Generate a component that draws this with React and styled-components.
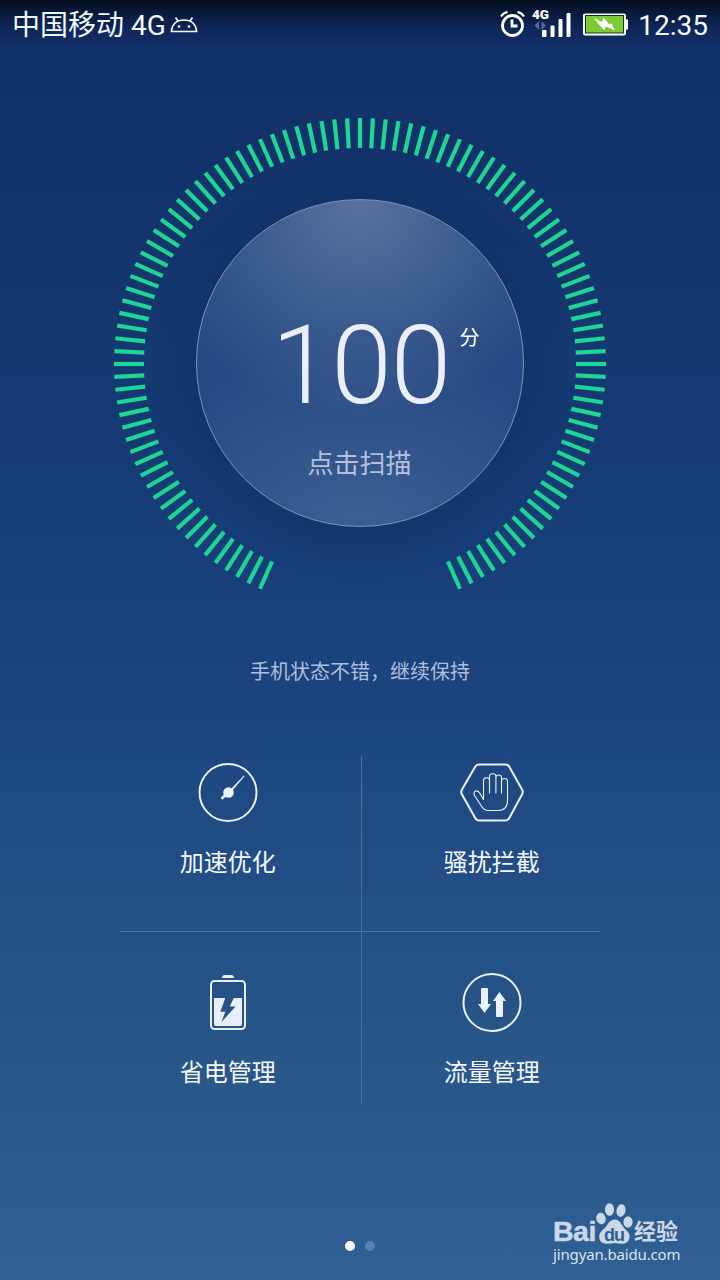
import styled, { createGlobalStyle } from "styled-components";

const GlobalStyle = createGlobalStyle`
    * {
        box-sizing: border-box;
    }

    body {
        margin: 0;
        background-color: #2f6094;
        font-family: Roboto, "Noto Sans CJK SC", sans-serif;
    }
`;

const Screen = styled.main`
    position: relative;
    display: flex;
    flex-direction: column;
    align-items: center;
    width: 720px;
    height: 1280px;
    overflow: hidden;
    color: #f4f8ff;
    background: linear-gradient(
        #050d20 0,
        #081939 12px,
        #0e285a 30px,
        #12306a 50px,
        #123269 120px,
        #153a73 420px,
        #1a427d 660px,
        #214d84 860px,
        #285688 1060px,
        #306094 1280px
    );
`;

const StatusBar = styled.header`
    display: flex;
    align-items: center;
    justify-content: space-between;
    width: 100%;
    height: 50px;
    padding: 0 12px;
`;

const StatusGroup = styled.div`
    display: flex;
    align-items: center;
    gap: ${({ $gap }) => $gap}px;
`;

const StatusText = styled.span`
    padding-top: 2px;
    font-size: 28px;
    line-height: 48px;
    white-space: pre;
`;

const Gauge = styled.section`
    display: grid;
    place-items: center;
    width: 492px;
    height: 492px;
    margin-top: 68px;

    & > * {
        grid-area: 1 / 1;
    }
`;

const Disc = styled.button`
    display: flex;
    flex-direction: column;
    align-items: center;
    width: 328px;
    height: 328px;
    margin: 0 1px 2px 0;
    padding: 102px 0 0;
    border: 1px solid #7f93bb;
    border-radius: 50%;
    color: inherit;
    font-family: inherit;
    background:
        radial-gradient(circle at 50% 0, rgba(255, 255, 255, 0.24), rgba(255, 255, 255, 0) 60%),
        radial-gradient(circle at 50% 115%, rgba(255, 255, 255, 0.12), rgba(255, 255, 255, 0) 60%),
        rgba(110, 150, 210, 0.18);
    box-shadow: 0 20px 48px rgba(12, 34, 78, 0.32);
`;

const Score = styled.div`
    display: flex;
    align-items: flex-start;
    padding-left: 32px;
    color: #eaeffb;
    font-size: 109px;
    font-weight: 300;
    line-height: 128px;
    letter-spacing: -0.8px;
`;

const Unit = styled.span`
    margin: 26px 0 0 9px;
    font-size: 20px;
    font-weight: 400;
    line-height: 20px;
    letter-spacing: 0;
    color: #fff;
`;

const Hint = styled.span`
    margin-top: 16px;
    font-size: 26px;
    font-weight: 400;
    line-height: 36px;
    color: #b3c1dd;
`;

const Message = styled.p`
    margin: 47px 0 0;
    font-size: 20px;
    font-weight: 400;
    line-height: 30px;
    color: #afbfdb;
`;

const Menu = styled.nav`
    display: grid;
    grid-template-columns: 241.5px 238.5px;
    grid-template-rows: 176px 172px;
    width: 480px;
    margin-top: 69px;
`;

const MenuItem = styled.a`
    display: flex;
    flex-direction: column;
    align-items: center;
    gap: 23px;
    padding-top: 40px;
    border: 0 solid #4e70a0;

    &:nth-child(-n + 2) {
        padding-top: 6px;
        border-bottom-width: 1px;
    }

    &:nth-child(odd) {
        padding-right: 25px;
        border-right-width: 1px;
    }

    &:nth-child(even) {
        padding-left: 22px;
    }
`;

const MenuLabel = styled.span`
    font-size: 24px;
    font-weight: 400;
    line-height: 36px;
`;

const Pager = styled.div`
    display: flex;
    gap: 10px;
    margin-top: 137px;
`;

const Dot = styled.span`
    width: 10px;
    height: 10px;
    border-radius: 50%;
    background-color: ${({ $active }) => ($active ? "#fff" : "#5a80ae")};
`;

const Watermark = styled.aside`
    position: absolute;
    right: 38px;
    bottom: 17px;
    width: 129px;
    color: #cbd8e8;
`;

const WatermarkLogo = styled.div`
    display: flex;
    align-items: flex-end;
    height: 44px;
    font-family: "Liberation Sans", "Noto Sans CJK SC", sans-serif;
    font-weight: 700;

    svg {
        margin-bottom: 2px;
    }
`;

const Brand = styled.span`
    width: 43px;
    font-size: 28.5px;
    line-height: 29px;
    letter-spacing: -0.5px;
    -webkit-text-stroke: 0.5px currentColor;
`;

const BrandSuffix = styled.span`
    margin-left: 1px;
    font-size: 22px;
    line-height: 28px;
    white-space: nowrap;
`;

const WatermarkUrl = styled.div`
    margin-top: -1px;
    font-family: "Noto Sans", sans-serif;
    font-size: 15px;
    line-height: 18px;
    letter-spacing: -0.15px;
    color: #d8e3f1;
`;

const MAX_ANGLE = 156;
const STEP = 3;
const ticks = Array.from({ length: (MAX_ANGLE * 2) / STEP + 1 }, (_, i) => i * STEP - MAX_ANGLE);

const TickRing = () => (
    <svg width="492" height="492" viewBox="-246 -246 492 492">
        {ticks.map((angle) => (
            <path key={angle} d="M0-246V-216" stroke="#1dd693" strokeWidth="4.2" transform={`rotate(${angle})`} />
        ))}
    </svg>
);

const AndroidIcon = () => (
    <svg width="28" height="18" viewBox="0 0 28 18" fill="none" stroke="#f4f8ff" strokeWidth="1.7">
        <path d="M1.5 15.5C2 8 7 4 14 4s12 4 12.5 11.5zM8 5 5.5 1.5M20 5l2.5-3.5" />
        <circle cx="9" cy="10.5" r="1.3" fill="#f4f8ff" stroke="none" />
        <circle cx="19" cy="10.5" r="1.3" fill="#f4f8ff" stroke="none" />
    </svg>
);

const AlarmIcon = () => (
    <svg width="26" height="28" viewBox="-0.5 1 26 28" fill="none" stroke="#fff" strokeWidth="2.8">
        <circle cx="13" cy="15.5" r="10" />
        <path d="M12.5 9.5V16H18" />
        <path d="M1.5 6.5Q3.5 3 8 2M24.5 6.5Q22.5 3 18 2" strokeWidth="2.2" />
    </svg>
);

const SignalIcon = () => (
    <svg width="40" height="40" viewBox="0 -1 40 40" fill="#fff">
        <text x="0" y="12.5" fontFamily="Roboto, sans-serif" fontSize="13.5" fontWeight="900">
            4G
        </text>
        <path d="M7 15v9l-4.500-4.500zM9.500 15v9l4.500-4.500z" fill="#526b96" />
        <rect x="10" y="24" width="4.500" height="7" rx="1" />
        <rect x="18.5" y="19.5" width="4" height="11.5" rx="1" />
        <rect x="26.5" y="13" width="4" height="18" rx="1" />
        <rect x="34.5" y="7" width="4" height="24" rx="1" />
    </svg>
);

const ChargingIcon = () => (
    <svg width="46" height="24" viewBox="0 1 46 24">
        <path d="M3 1.5h39q2 0 2 2v4h2v10h-2v4q0 2-2 2H3q-2 0-2-2v-18q0-2 2-2z" fill="#fff" />
        <rect x="3.500" y="3.500" width="38" height="17.500" fill="#7ccb32" stroke="#17331f" />
        <path d="M11.5 5.5 19.7 10l2-4.5 5.6 7 2-1.500 3.6 7.5L24 14.5 22 18l-5.700-6.300z" fill="#fff" />
    </svg>
);

const SpeedIcon = () => (
    <svg width="64" height="60" viewBox="0 0 64 60" fill="none" stroke="#eaf2ff" strokeWidth="2">
        <circle cx="32" cy="30.5" r="28.5" />
        <circle cx="32.5" cy="30.5" r="5.3" fill="#eaf2ff" stroke="none" />
        <path d="M34.5 27.5 47.800 13.500l.7.7L36 29z" fill="#eaf2ff" stroke="none" />
        <path d="m31 31.5-5.500 5.300" strokeWidth="2.800" />
    </svg>
);

const BlockIcon = () => (
    <svg width="64" height="60" viewBox="0 0 64 60" fill="none" stroke="#eaf2ff" strokeLinejoin="round">
        <path
            d="M19 2.500h26.500q2.500 0 3.800 2.200L62 27.500q1.500 2.500 0 5L49.300 56q-1.300 2.500-3.800 2.500H19q-2.500 0-3.800-2.500L2 32.500q-1.500-2.500 0-5L15.200 4.700q1.300-2.200 3.800-2.200z"
            strokeWidth="2"
        />
        <path
            d="M23.500 37.500V18.500q0-2.800 3-2.800t3 2.800V31 14.500q0-2.800 3.200-2.800t3.200 2.800V31 15.500q0-2.500 2.800-2.500t2.800 2.500V31 19q0-2.500 3-2.500t3 2.500v19q0 10.500-9 10.500H28q-4 0-7-5l-6.500-10q-1.500-3.500 1.200-4.500 2.300-.5 4 2z"
            strokeWidth="1.100"
        />
    </svg>
);

const BatteryIcon = () => (
    <svg width="64" height="60" viewBox="0 0 64 60">
        <path d="M26 6q0-3 3-3h6q3 0 3 3z" fill="#e8eefa" />
        <rect x="15" y="9" width="34" height="48" rx="3.500" fill="none" stroke="#e8f0fd" strokeWidth="2" />
        <path d="M18 26h28v26q0 2-2 2H20q-2 0-2-2z" fill="#e8eefa" />
        <path d="M29.500 25.500H38L33.800 34.500h5.700L25.500 50l3.800-10.200h-5z" fill="#275487" />
    </svg>
);

const TrafficIcon = () => (
    <svg width="64" height="60" viewBox="0 0 64 60">
        <circle cx="32" cy="30.500" r="28.500" fill="none" stroke="#eaf2ff" strokeWidth="2" />
        <path d="M22 16h5q1 0 1 1v15h3l-6.500 9L18 32h3V17q0-1 1-1z" fill="#eaf2ff" />
        <path d="M39.500 20 46 29h-3v15q0 1-1 1h-5q-1 0-1-1V29h-3z" fill="#eaf2ff" />
    </svg>
);

const PawIcon = () => (
    <svg width="37" height="42" viewBox="0 0 37 42" fill="#cbd8e8">
        <ellipse cx="5" cy="16.500" rx="4.700" ry="5.800" transform="rotate(-10 5 16.500)" />
        <ellipse cx="13.500" cy="7.500" rx="4.500" ry="6.300" />
        <ellipse cx="25" cy="8.500" rx="4.500" ry="6.300" transform="rotate(12 25 8.500)" />
        <ellipse cx="32" cy="20" rx="4.600" ry="5.800" />
        <path d="M19 17.500q4 0 7 5.500 2 3.500 5 6 4 4 2 8.500t-7 4.300q-3.500 0-7-.8-3.500.8-8 .8-6 0-7.500-4.500T6 28.500q3.500-2.500 5.500-6 3-5 7.500-5z" />
        <text x="8" y="38.500" fill="#2e5d92" fontFamily="Liberation Sans, sans-serif" fontSize="18" fontWeight="700" letterSpacing="-1">
            du
        </text>
    </svg>
);

const menuItems = [
    { label: "加速优化", Icon: SpeedIcon },
    { label: "骚扰拦截", Icon: BlockIcon },
    { label: "省电管理", Icon: BatteryIcon },
    { label: "流量管理", Icon: TrafficIcon },
];

export default function App() {
    return (
        <>
            <GlobalStyle />
            <Screen lang="zh-CN">
                <StatusBar>
                    <StatusGroup $gap={4}>
                        <StatusText>中国移动 4G</StatusText>
                        <AndroidIcon />
                    </StatusGroup>
                    <StatusGroup $gap={10}>
                        <StatusGroup $gap={7}>
                            <AlarmIcon />
                            <SignalIcon />
                        </StatusGroup>
                        <ChargingIcon />
                        <StatusText>12:35</StatusText>
                    </StatusGroup>
                </StatusBar>
                <Gauge>
                    <TickRing />
                    <Disc type="button">
                        <Score>
                            100<Unit>分</Unit>
                        </Score>
                        <Hint>点击扫描</Hint>
                    </Disc>
                </Gauge>
                <Message>手机状态不错，继续保持</Message>
                <Menu>
                    {menuItems.map(({ label, Icon }) => (
                        <MenuItem key={label}>
                            <Icon />
                            <MenuLabel>{label}</MenuLabel>
                        </MenuItem>
                    ))}
                </Menu>
                <Pager>
                    <Dot $active />
                    <Dot />
                </Pager>
                <Watermark>
                    <WatermarkLogo>
                        <Brand>Bai</Brand>
                        <PawIcon />
                        <BrandSuffix>经验</BrandSuffix>
                    </WatermarkLogo>
                    <WatermarkUrl>jingyan.baidu.com</WatermarkUrl>
                </Watermark>
            </Screen>
        </>
    );
}
